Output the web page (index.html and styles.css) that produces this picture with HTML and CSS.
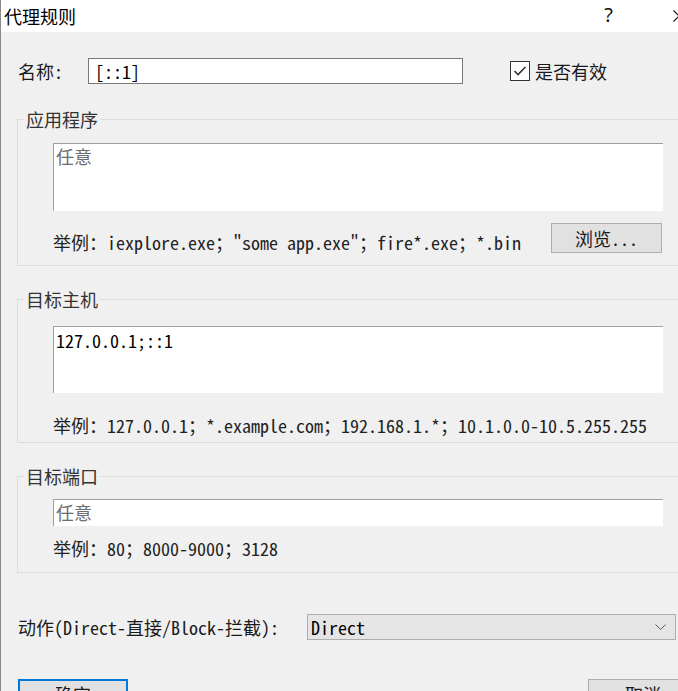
FILE: index.html
```html
<!DOCTYPE html>
<html lang="zh-CN">
<head>
<meta charset="utf-8">
<title>代理规则</title>
<link rel="stylesheet" href="styles.css">
</head>
<body>
<div class="window">
  <header class="titlebar">
    <span class="title">代理规则</span>
    <span class="help">?</span>
    <svg class="close" width="12" height="12" viewBox="0 0 12 12"><path d="M0.5 0.5 L11.5 11.5 M11.5 0.5 L0.5 11.5" stroke="#111" stroke-width="1.1" fill="none"/></svg>
  </header>
  <main class="body ss">
    <div class="name-row">
      <span class="name-label">名称:</span>
      <div class="field name-field">[::1]</div>
      <label class="check">
        <span class="box"><svg width="18" height="18" viewBox="0 0 18 18"><path d="M3.5 9 L7 12.5 L14.5 5" stroke="#333" stroke-width="1.6" fill="none"/></svg></span>
        <span>是否有效</span>
      </label>
    </div>

    <fieldset class="group g-app">
      <legend>应用程序</legend>
      <div class="area tall placeholder">任意</div>
      <div class="example-row">
        <span class="example">举例：iexplore.exe；"some app.exe"；fire*.exe；*.bin</span>
        <span class="btn browse">浏览...</span>
      </div>
    </fieldset>

    <fieldset class="group g-host">
      <legend>目标主机</legend>
      <div class="area tall2">127.0.0.1;::1</div>
      <div class="example ex-host">举例：127.0.0.1；*.example.com；192.168.1.*；10.1.0.0-10.5.255.255</div>
    </fieldset>

    <fieldset class="group g-port">
      <legend>目标端口</legend>
      <div class="area short placeholder">任意</div>
      <div class="example ex-port">举例：80；8000-9000；3128</div>
    </fieldset>

    <div class="action-row">
      <span class="action-label">动作(Direct-直接/Block-拦截):</span>
      <div class="select">
        <span>Direct</span>
        <svg width="11" height="6" viewBox="0 0 11 6"><path d="M0.5 0.5 L5.5 5.5 L10.5 0.5" stroke="#555" stroke-width="1" fill="none"/></svg>
      </div>
    </div>

    <div class="button-row">
      <span class="btn ok">确定</span>
      <span class="btn cancel">取消</span>
    </div>
  </main>
</div>
</body>
</html>
```

FILE: styles.css
```css
* { box-sizing: border-box; }

html, body {
  margin: 0;
  padding: 0;
  background: #f0f0f0;
}

.window {
  width: 678px;
  height: 691px;
  overflow: hidden;
  background: #f0f0f0;
  border-left: 1px solid #8a8a8a;
}

.titlebar {
  height: 32px;
  background: #ffffff;
  display: flex;
  align-items: center;
  padding-left: 3px;
}

.title {
  font-family: "Noto Sans CJK SC", sans-serif;
  font-size: 18px;
  color: #000;
  line-height: 32px;
}

.help {
  margin-left: auto;
  font-family: "Noto Sans", sans-serif;
  font-size: 20px;
  color: #111;
  line-height: 32px;
  margin-top: -2px;
}

.close {
  margin-left: 60px;
  margin-right: -7px;
  flex: none;
}

.ss {
  font-family: "Noto Sans Mono CJK SC", "Noto Sans CJK SC", monospace;
  font-size: 18px;
  line-height: 20px;
  color: #1a1a1a;
}

.name-row {
  display: flex;
  align-items: center;
  height: 26px;
  margin-top: 26px;
  padding-left: 17px;
}

.name-label {
  width: 70px;
  flex: none;
}

.field {
  background: #fff;
  border: 1px solid #7a7a7a;
  height: 26px;
  line-height: 24px;
  padding-left: 6px;
  color: #000;
}

.name-field {
  width: 375px;
}

.check {
  display: flex;
  align-items: center;
  margin-left: 47px;
  gap: 5px;
}

.box {
  width: 20px;
  height: 20px;
  border: 1px solid #333;
  background: #fff;
  display: flex;
}

.group {
  margin: 0 -8px 0 16px;
  border: 1px solid #dcdcdc;
  padding: 0 0 0 6px;
  min-width: 0;
}

.group legend {
  padding: 0 2px;
  line-height: 20px;
  font-size: 18px;
  color: #333;
}

.g-app { margin-top: 25px; padding-top: 14px; padding-bottom: 12px; }
.g-host { margin-top: 23px; padding-top: 17px; padding-bottom: 7px; }
.g-port { margin-top: 23px; padding-top: 13px; padding-bottom: 14px; }

.area {
  margin-left: 29px;
  width: 610px;
  background: #fff;
  border-top: 1px solid #a0a0a0;
  border-left: 1px solid #a0a0a0;
  padding: 2px 2px;
  color: #000;
}

.area.tall { height: 68px; }
.area.tall2 { height: 67px; padding-top: 3px; }
.area.short { height: 27px; padding-top: 2px; }

.placeholder { color: #6d6d6d; }

.example-row {
  margin-left: 29px;
  width: 609px;
  margin-top: 12px;
  display: flex;
  justify-content: space-between;
  align-items: center;
}

.example-row .example { padding-top: 8px; }

.example {
  color: #222;
  white-space: nowrap;
}

.ex-host { margin-left: 29px; margin-top: 22px; }
.ex-port { margin-left: 29px; margin-top: 12px; }

.btn {
  display: flex;
  align-items: center;
  justify-content: center;
  background: #e1e1e1;
  border: 1px solid #adadad;
  color: #1a1a1a;
}

.browse {
  width: 111px;
  height: 30px;
}

.action-row {
  display: flex;
  align-items: center;
  height: 26px;
  margin-top: 41px;
  padding-left: 17px;
}

.action-label {
  width: 289px;
  flex: none;
  white-space: nowrap;
}

.select {
  width: 369px;
  height: 26px;
  flex: none;
  background: #e5e5e5;
  border: 1px solid #adadad;
  display: flex;
  align-items: center;
  justify-content: space-between;
  padding: 0 9px 0 3px;
  color: #000;
}

.button-row {
  display: flex;
  gap: 460px;
  margin-top: 39px;
  padding-left: 17px;
}

.button-row .btn {
  width: 110px;
  height: 30px;
  flex: none;
}

.ok {
  border: 2px solid #0078d7;
}
```
